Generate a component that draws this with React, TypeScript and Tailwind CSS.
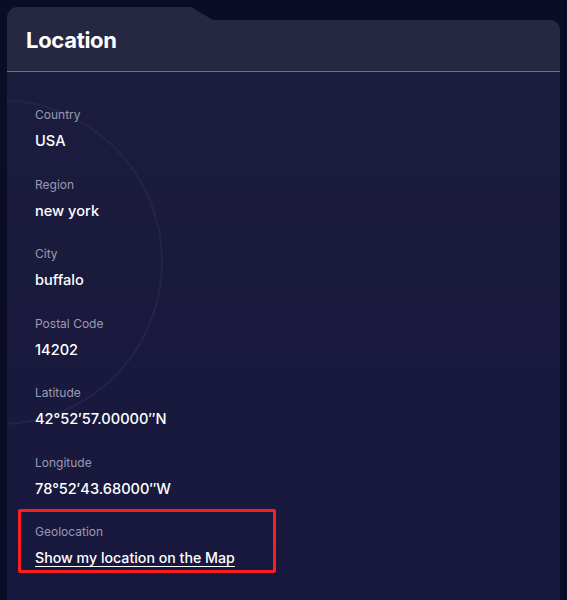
import React from "react";

const items = [
  { label: "Country", value: "USA" },
  { label: "Region", value: "new york" },
  { label: "City", value: "buffalo" },
  { label: "Postal Code", value: "14202" },
  { label: "Latitude", value: "42°52′57.00000″N" },
  { label: "Longitude", value: "78°52′43.68000″W" },
];

const App: React.FC = () => {
  return (
    <div
      className="h-[600px] w-[567px] overflow-hidden bg-[#0b0c26] pl-[7px] pr-[7px] pt-[7px]"
      style={{ fontFamily: "Inter, 'Noto Sans', sans-serif" }}
    >
      <div className="flex h-full flex-col">
        {/* tab on top */}
        <div className="flex h-[13px]">
          <div className="w-[184px] rounded-tl-[10px] bg-[#262741]" />
          <svg width="22" height="13" viewBox="0 0 22 13" className="block">
            <polygon points="0,0 22,13 0,13" fill="#262741" />
          </svg>
        </div>
        <div className="flex h-[51px] items-start rounded-tr-[10px] bg-[#262741] pl-[19px] pt-[7px]">
          <h1 className="text-[22px] font-bold leading-[26px] tracking-[-0.3px] text-white">
            Location
          </h1>
        </div>
        <div className="h-px bg-[#6e6f8c]" />

        <div className="relative flex-1 overflow-hidden bg-gradient-to-b from-[#1c1c3d] to-[#18173d] pl-[28px] pt-[35px]">
          {/* faint decorative ring */}
          <svg
            className="pointer-events-none absolute left-[-7px] top-[-72px]"
            width="560"
            height="600"
          >
            <circle cx="0" cy="262" r="162" fill="none" stroke="#24244a" strokeWidth="2" />
          </svg>

          <div className="relative flex flex-col">
            {items.map((item) => (
              <div key={item.label} className="h-[69.5px]">
                <div className="text-[12px] leading-[16px] text-[#9a9ab3]">{item.label}</div>
                <div className="mt-[8px] text-[14.6px] font-medium leading-[20px] text-white">
                  {item.value}
                </div>
              </div>
            ))}
            <div className="-ml-[17px] -mt-[15px] w-[258px] rounded-[2px] border-[3px] border-[#fa1e1e] px-[14px] pb-[2px] pt-[12px]">
              <div className="text-[12px] leading-[16px] text-[#9a9ab3]">Geolocation</div>
              <a
                href="#"
                className="mt-[8px] block text-[14.2px] font-medium leading-[20px] text-white underline underline-offset-[3px]"
              >
                Show my location on the Map
              </a>
            </div>
          </div>
        </div>
      </div>
    </div>
  );
};

export default App;
